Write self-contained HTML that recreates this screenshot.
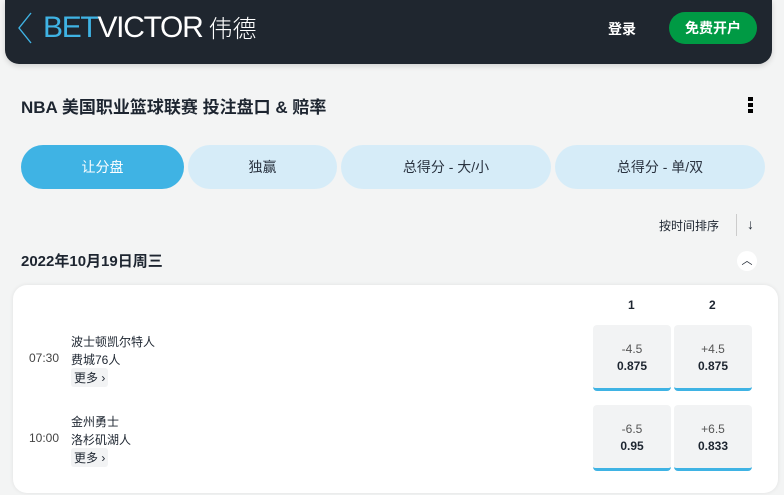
<!DOCTYPE html>
<html><head><meta charset="utf-8"><style>
*{margin:0;padding:0;box-sizing:border-box}
body{width:784px;height:495px;background:#f3f4f4;font-family:"Liberation Sans","Noto Sans CJK SC",sans-serif;position:relative;overflow:hidden;color:#1d2530}
.a{position:absolute}
.hdr{left:5px;top:0;width:767px;height:64px;background:#1f262f;border-radius:0 0 14px 14px;box-shadow:0 2px 6px rgba(0,0,0,.15)}
.tab{top:145px;height:44px;border-radius:22px;background:#d6ecf8;font-size:14px;line-height:44px;text-align:center;color:#2a3340}
.card{left:13px;top:285px;width:765px;height:208px;background:#fff;border-radius:14px;box-shadow:0 0 4px rgba(0,0,0,.08)}
.odd{width:78px;height:66px;background:#f2f3f4;border-radius:4px;border-bottom:3px solid #3fb3e4;text-align:center;font-size:12px}
.odd .l{margin-top:17px;color:#555;font-size:12px}
.odd .p{margin-top:3px;font-weight:bold;font-size:12px;color:#1d2530}
.t{font-size:12px;color:#1d2530}
.more{background:#f2f3f4;border-radius:3px;font-size:12px;padding:1px 3px}
</style></head><body>
<div class="a hdr"></div>
<svg class="a" style="left:17px;top:12px" width="16" height="32"><path d="M14 1 L2 16 L14 31" stroke="#3fb3e4" stroke-width="1.4" fill="none"/></svg>
<div class="a" style="left:43px;top:10px;font-size:30px;letter-spacing:-1.3px;line-height:36px;color:#3fb3e4;font-weight:300">BET<span style="color:#fff">VICTOR</span><span style="color:#fff;font-size:24px;margin-left:6px;letter-spacing:0">伟德</span></div>
<div class="a" style="left:608px;top:19px;color:#fff;font-weight:bold;font-size:14px">登录</div>
<div class="a" style="left:669px;top:12px;width:88px;height:32px;border-radius:16px;background:#009a44;color:#fff;font-weight:bold;font-size:14px;line-height:32px;text-align:center">免费开户</div>
<div class="a" style="left:21px;top:93px;font-size:17px;font-weight:bold">NBA 美国职业篮球联赛 投注盘口 &amp; 赔率</div>
<div class="a" style="left:748px;top:97px;width:5px;height:16px;background:repeating-linear-gradient(#000 0 4px,transparent 4px 6px)"></div>
<div class="a tab" style="left:21px;width:163px;background:#3fb3e4;color:#fff">让分盘</div>
<div class="a tab" style="left:188px;width:149px">独赢</div>
<div class="a tab" style="left:341px;width:210px">总得分 - 大/小</div>
<div class="a tab" style="left:555px;width:210px">总得分 - 单/双</div>
<div class="a" style="left:659px;top:217px;font-size:12px">按时间排序</div>
<div class="a" style="left:736px;top:214px;width:1px;height:22px;background:#ccc"></div>
<div class="a" style="left:747px;top:216px;font-size:14px">↓</div>
<div class="a" style="left:21px;top:250px;font-size:15px;font-weight:bold">2022年10月19日周三</div>
<div class="a" style="left:737px;top:251px;width:20px;height:20px;border-radius:50%;background:#fff;text-align:center;font-size:11px;line-height:20px">︿</div>
<div class="a card"></div>
<div class="a t" style="left:628px;top:298px;font-weight:bold">1</div>
<div class="a t" style="left:709px;top:298px;font-weight:bold">2</div>
<div class="a t" style="left:71px;top:333px">波士顿凯尔特人</div>
<div class="a t" style="left:29px;top:351px;color:#444">07:30</div>
<div class="a t" style="left:71px;top:351px">费城76人</div>
<div class="a more" style="left:71px;top:368px">更多 ›</div>
<div class="a t" style="left:71px;top:413px">金州勇士</div>
<div class="a t" style="left:29px;top:431px;color:#444">10:00</div>
<div class="a t" style="left:71px;top:431px">洛杉矶湖人</div>
<div class="a more" style="left:71px;top:448px">更多 ›</div>
<div class="a odd" style="left:593px;top:325px"><div class="l">-4.5</div><div class="p">0.875</div></div>
<div class="a odd" style="left:674px;top:325px"><div class="l">+4.5</div><div class="p">0.875</div></div>
<div class="a odd" style="left:593px;top:405px"><div class="l">-6.5</div><div class="p">0.95</div></div>
<div class="a odd" style="left:674px;top:405px"><div class="l">+6.5</div><div class="p">0.833</div></div>
</body></html>
